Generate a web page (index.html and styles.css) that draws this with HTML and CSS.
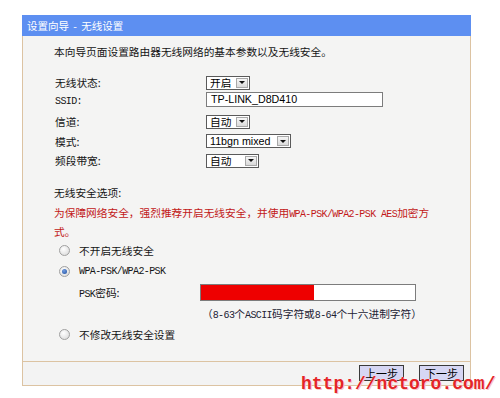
FILE: index.html
```html
<!DOCTYPE html>
<html lang="zh">
<head>
<meta charset="utf-8">
<title>设置向导 - 无线设置</title>
<link rel="stylesheet" href="styles.css">
</head>
<body>
<div class="panel">
  <div class="title">设置向导 - 无线设置</div>
  <div class="box">
    <div class="body">
      <p class="intro">本向导页面设置路由器无线网络的基本参数以及无线安全。</p>
      <div class="form">
        <div class="row"><span class="lbl">无线状态:</span><span class="sel w44"><span class="val">开启</span><span class="arr"></span></span></div>
        <div class="row tight"><span class="lbl"><span class="m">SSID:</span></span><span class="inp">TP-LINK_D8D410</span></div>
        <div class="row"><span class="lbl">信道:</span><span class="sel w44"><span class="val">自动</span><span class="arr"></span></span></div>
        <div class="row"><span class="lbl">模式:</span><span class="sel w85"><span class="val en">11bgn mixed</span><span class="arr"></span></span></div>
        <div class="row"><span class="lbl">频段带宽:</span><span class="sel w53"><span class="val">自动</span><span class="arr"></span></span></div>
      </div>
      <div class="sec">无线安全选项:</div>
      <p class="warn">为保障网络安全，强烈推荐开启无线安全，并使用<span class="m">WPA-PSK/WPA2-PSK AES</span>加密方<br>式。</p>
      <div class="opt"><span class="radio"></span>不开启无线安全</div>
      <div class="opt"><span class="radio on"></span><span class="m">WPA-PSK/WPA2-PSK</span></div>
      <div class="psk"><span class="lbl2"><span class="m">PSK</span>密码:</span><span class="pwd"><span class="redact"></span></span></div>
      <div class="hint">（<span class="m">8-63</span>个<span class="m">ASCII</span>码字符或<span class="m">8-64</span>个十六进制字符）</div>
      <div class="opt"><span class="radio"></span>不修改无线安全设置</div>
    </div>
    <div class="foot">
      <button class="btn">上一步</button>
      <button class="btn">下一步</button>
    </div>
  </div>
</div>
<div class="wm">http://nctoro.com/</div>
</body>
</html>
```

FILE: styles.css
```css
* { box-sizing: border-box; }
html, body { margin: 0; padding: 0; }
body {
  background: #ffffff;
  font-family: "Noto Sans CJK SC", sans-serif;
  font-size: 10.7px;
  color: #151515;
  position: relative;
  height: 398px;
  overflow: hidden;
}
.panel {
  margin: 15px 0 0 22px;
  width: 449px;
}
.title {
  height: 21px;
  background: #5d8ff1;
  color: #ffffff;
  padding-left: 5px;
  line-height: 21px;
  font-size: 10.5px;
  word-spacing: 2px;
}
.box {
  border: 1px solid #dcc3a2;
  border-top: 0;
  background: #f4f4f3;
}
.body {
  height: 325px;
  padding: 9px 0 0 31px;
}
.intro {
  margin: 0;
  line-height: 14px;
}
.m {
  font-family: "Liberation Mono", monospace;
  font-size: 10px;
  letter-spacing: -0.6px;
}
.form {
  margin: 14px 0 0 1px;
}
.row {
  display: flex;
  align-items: center;
  height: 19.5px;
}
.row.tight {
  margin: -3px 0 3px;
}
.lbl {
  width: 151px;
}
.sel {
  display: inline-flex;
  align-items: center;
  justify-content: space-between;
  height: 14px;
  border: 1px solid #5a5a5a;
  background: #ffffff;
  padding: 0 1px 0 3px;
  color: #000;
  line-height: 12px;
}
.w44 { width: 44px; }
.w53 { width: 53px; }
.w85 { width: 85px; }
.val.en {
  font-family: "Liberation Sans", sans-serif;
  font-size: 10.7px;
}
.arr {
  width: 12px;
  height: 10px;
  border: 1px solid #a8a8a8;
  background: linear-gradient(#f6f6f6, #dadada);
  display: flex;
  align-items: center;
  justify-content: center;
}
.arr::after {
  content: "";
  border-left: 3px solid transparent;
  border-right: 3px solid transparent;
  border-top: 3px solid #111;
}
.inp {
  width: 177px;
  height: 15px;
  border: 1px solid #7c7c7c;
  background: #ffffff;
  padding-left: 4px;
  font-family: "Liberation Sans", sans-serif;
  font-size: 10.7px;
  line-height: 13px;
  color: #000;
}
.sec {
  margin-top: 13.5px;
  line-height: 17px;
}
.warn {
  margin: 3px 0 0;
  line-height: 17px;
  color: #c21818;
}
.opt {
  display: flex;
  align-items: center;
  height: 21px;
  padding-left: 5px;
}
.radio {
  width: 11px;
  height: 11px;
  border-radius: 50%;
  border: 1px solid #a0a0a0;
  background: radial-gradient(circle at 40% 35%, #ffffff, #d6d6d6);
  margin-right: 9px;
  display: flex;
  align-items: center;
  justify-content: center;
}
.radio.on::after {
  content: "";
  width: 5px;
  height: 5px;
  border-radius: 50%;
  background: radial-gradient(circle at 40% 35%, #6f9be0, #1f4f9e);
}
.psk {
  display: flex;
  align-items: center;
  height: 21px;
  padding-left: 25px;
}
.lbl2 {
  width: 121px;
}
.pwd {
  width: 216px;
  height: 17px;
  border: 1px solid #7c7c7c;
  background: #ffffff;
  display: flex;
}
.redact {
  width: 113px;
  background: #ee0000;
}
.hint {
  height: 21px;
  line-height: 21px;
  padding-left: 148px;
  color: #222233;
}
.foot {
  height: 24px;
  border-top: 1px solid #dcc3a2;
  background: #f3f3f3;
  display: flex;
  justify-content: flex-end;
  align-items: flex-start;
  gap: 15px;
  padding: 3px 6px 0 0;
}
.btn {
  width: 45px;
  height: 16px;
  padding: 0;
  border: 1px solid #3a3a3a;
  background: #d6d6f3;
  font-family: "Noto Sans CJK SC", sans-serif;
  font-size: 11px;
  line-height: 14px;
  color: #000;
}
.wm {
  position: absolute;
  left: 301px;
  top: 374px;
  font-family: "Liberation Mono", monospace;
  font-weight: bold;
  font-size: 18px;
  line-height: 20px;
  color: #e42528;
  text-shadow: 0 0 1px #ffffff, 1px 1px 0 #f6c6c6;
  white-space: nowrap;
}
```
